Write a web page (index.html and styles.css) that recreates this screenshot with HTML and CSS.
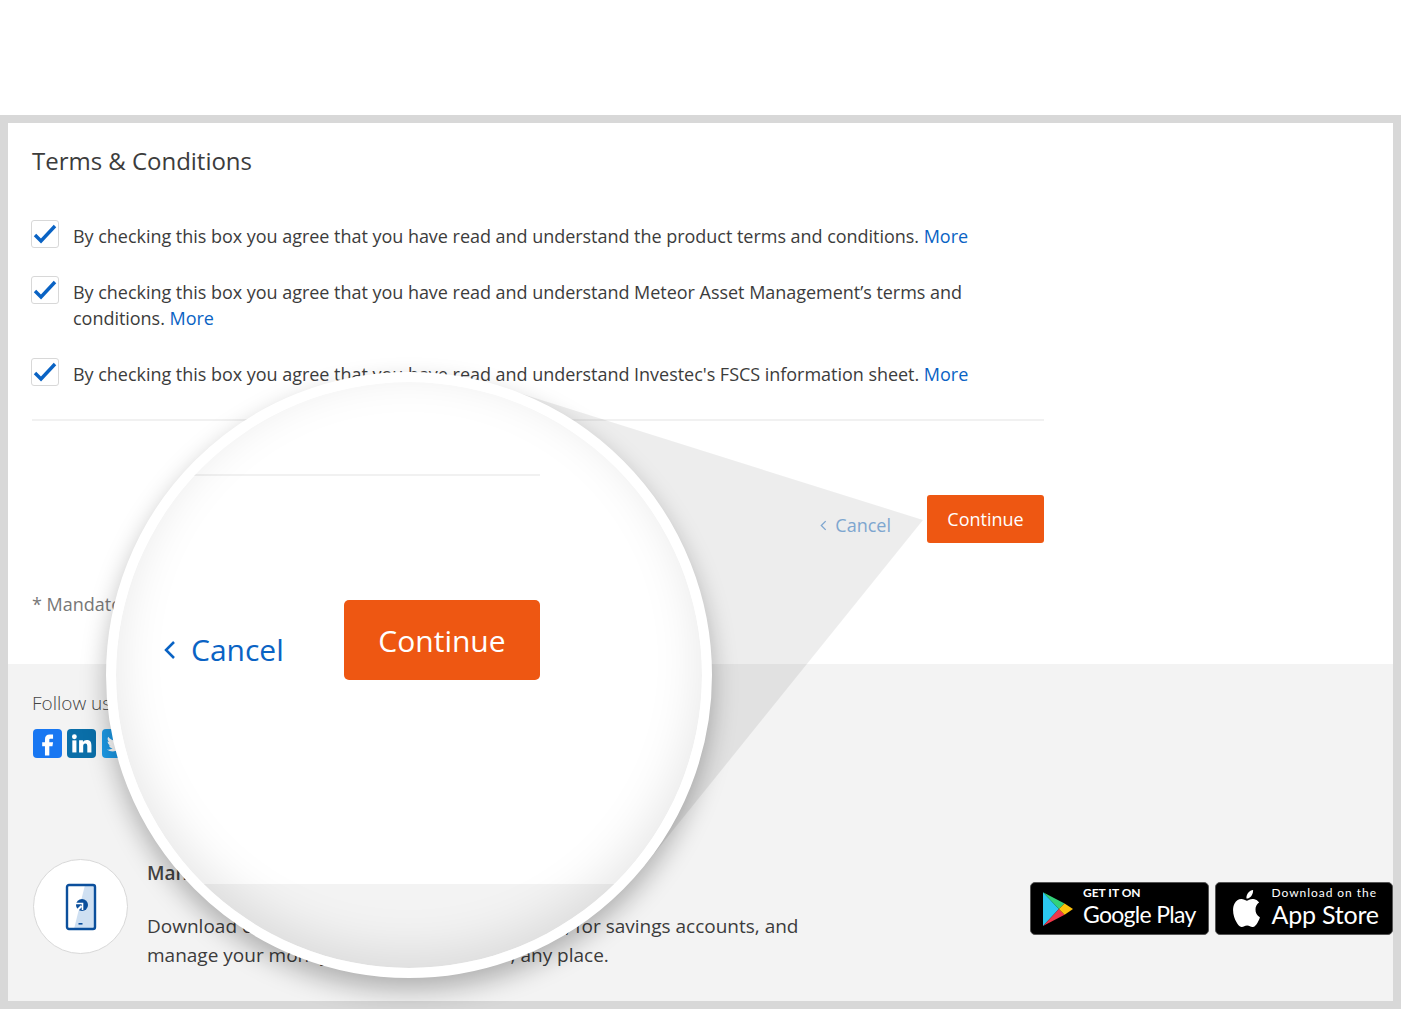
FILE: index.html
```html
<!DOCTYPE html>
<html lang="en">
<head>
    <meta charset="UTF-8">
    <meta name="viewport" content="width=device-width, initial-scale=1.0">
    <title>Terms &amp; Conditions</title>
    <link rel="stylesheet" href="styles.css">
</head>
<body>
    <div class="top"></div>
    <div class="frame">
        <div class="card">
            <h1 class="title">Terms &amp; Conditions</h1>
            <div class="terms">
                <div class="term">
                    <span class="box"><svg viewBox="0 0 24 20" width="24" height="20"><path d="M2 11l6 6L22 2" fill="none" stroke="#0a63c4" stroke-width="3.4"/></svg></span>
                    <p>By checking this box you agree that you have read and understand the product terms and conditions. <a class="more">More</a></p>
                </div>
                <div class="term">
                    <span class="box"><svg viewBox="0 0 24 20" width="24" height="20"><path d="M2 11l6 6L22 2" fill="none" stroke="#0a63c4" stroke-width="3.4"/></svg></span>
                    <p>By checking this box you agree that you have read and understand Meteor Asset Management’s terms and conditions. <a class="more">More</a></p>
                </div>
                <div class="term">
                    <span class="box"><svg viewBox="0 0 24 20" width="24" height="20"><path d="M2 11l6 6L22 2" fill="none" stroke="#0a63c4" stroke-width="3.4"/></svg></span>
                    <p>By checking this box you agree that you have read and understand Investec's FSCS information sheet. <a class="more">More</a></p>
                </div>
            </div>
            <div class="rule"></div>
            <div class="actions">
                <a class="cancel"><svg viewBox="0 0 8 12" width="7" height="11"><path d="M6.5 1L1.5 6l5 5" fill="none" stroke="currentColor" stroke-width="1.5"/></svg>Cancel</a>
                <button class="continue">Continue</button>
            </div>
            <p class="mandatory">* Mandatory fields</p>
        </div>

        <div class="footer">
            <p class="follow">Follow us</p>
            <div class="social">
                <span class="soc fb"><svg viewBox="0 0 24 24" width="29" height="29"><path d="M14.2 8h2.4V4.6h-2.8c-2.6 0-3.9 1.6-3.9 4V11H7.6v3.3h2.3V22h3.6v-7.7h2.6l.5-3.3h-3.1V8.9c0-.6.2-.9.7-.9z" fill="#fff"/></svg></span>
                <span class="soc li"><svg viewBox="0 0 24 24" width="29" height="29"><g fill="#fff"><rect x="4.4" y="9.4" width="3.4" height="10"/><circle cx="6.1" cy="6.4" r="2"/><path d="M10 9.4h3.2v1.4c.6-1 1.7-1.7 3.2-1.7 2.900 0 3.800 1.800 3.800 4.600v5.700h-3.400v-5.100c0-1.300-.3-2.400-1.600-2.400s-1.800 1-1.800 2.400v5.100H10z"/></g></svg></span>
                <span class="soc tw"><svg viewBox="0 0 24 24" width="29" height="29"><path d="M20 7.300c-.6.300-1.200.4-1.900.5.700-.4 1.200-1 1.400-1.800-.6.400-1.300.6-2.100.8a3.300 3.300 0 0 0-5.600 3c-2.700-.1-5.100-1.400-6.700-3.400-.9 1.500-.4 3.400 1 4.400-.5 0-1-.2-1.500-.4 0 1.600 1.100 2.900 2.600 3.200-.5.100-1 .2-1.500.1.400 1.300 1.600 2.200 3.100 2.300A6.600 6.600 0 0 1 3.900 17a9.300 9.300 0 0 0 14.300-8.300c.7-.4 1.300-.9 1.800-1.400z" fill="#fff"/></svg></span>
            </div>
            <div class="app-row">
                <div class="phone">
                    <svg viewBox="0 0 32 48" width="32" height="48">
                        <path d="M20 2h10v44H9z" fill="#cfe0f2"/>
                        <rect x="2" y="2" width="28" height="44" rx="2" fill="none" stroke="#0b4f9c" stroke-width="2.4"/>
                        <circle cx="17" cy="22" r="6" fill="#0b4f9c"/>
                        <path d="M10.500 29l6-6" fill="none" stroke="#fff" stroke-width="2.200"/>
                        <path d="M11 20.500h6.500V27" fill="none" stroke="#fff" stroke-width="1.600"/>
                        <rect x="13.500" y="40" width="4" height="1.600" fill="#0b4f9c"/>
                    </svg>
                </div>
                <div class="app-text">
                    <h2>Manage your account</h2>
                    <p>Download our Investec Mobile Banking app too, for savings accounts, and<br>manage your money anywhere, any hour, any place.</p>
                </div>
                <div class="stores">
                    <div class="store play">
                        <svg viewBox="0 0 32 36" width="30" height="36">
                            <path d="M0 0v36l17-18z" fill="#2bc8f0"/>
                            <path d="M0 0l17 18 6-6z" fill="#33d17a"/>
                            <path d="M0 36l17-18 6 6z" fill="#f0374a"/>
                            <path d="M23 12l-6 6 6 6 9-6z" fill="#fdc30b"/>
                        </svg>
                        <div>
                            <span class="small">GET IT ON</span>
                            <span class="big">Google Play</span>
                        </div>
                    </div>
                    <div class="store apple">
                        <svg viewBox="0 0 24 24" width="33" height="37" preserveAspectRatio="none"><path d="M12.152 6.896c-.948 0-2.415-1.078-3.960-1.040-2.040.027-3.910 1.183-4.961 3.014-2.117 3.675-.546 9.103 1.519 12.090 1.013 1.454 2.208 3.090 3.792 3.039 1.520-.065 2.090-.987 3.935-.987 1.831 0 2.350.987 3.960.948 1.637-.026 2.676-1.480 3.676-2.948 1.156-1.688 1.636-3.325 1.662-3.415-.039-.013-3.182-1.221-3.220-4.857-.026-3.040 2.480-4.494 2.597-4.559-1.429-2.090-3.623-2.324-4.390-2.376-2-.156-3.675 1.090-4.610 1.090zM15.530 3.830c.843-1.012 1.400-2.427 1.245-3.830-1.207.052-2.662.805-3.532 1.818-.780.896-1.454 2.338-1.273 3.714 1.338.104 2.715-.688 3.559-1.701" fill="#fff"/></svg>
                        <div>
                            <span class="small">Download on the</span>
                            <span class="big">App Store</span>
                        </div>
                    </div>
                </div>
            </div>
        </div>
    </div>

    <svg class="cone" viewBox="0 0 1401 1009" width="1401" height="1009"><polygon points="923,520 500,387 409,675 645,865" fill="#000" fill-opacity="0.07"/></svg>

    <div class="lens">
        <div class="lens-main">
            <div class="lens-rule"></div>
            <div class="lens-actions">
                <a class="lens-cancel"><svg viewBox="0 0 12 20" width="12" height="20"><path d="M10 2l-8 8 8 8" fill="none" stroke="currentColor" stroke-width="2.500"/></svg>Cancel</a>
                <button class="lens-continue">Continue</button>
            </div>
        </div>
        <div class="lens-foot"></div>
    </div>
</body>
</html>
```

FILE: styles.css
```css
* {
    margin: 0;
    padding: 0;
    box-sizing: border-box;
}
body {
    position: relative;
    height: 1009px;
    overflow: hidden;
    background: #fff;
    font-family: "Open Sans", "Liberation Sans", sans-serif;
    font-size: 18px;
    color: #3c3c3c;
}
.top {
    height: 115px;
}
.frame {
    height: 894px;
    padding: 8px;
    background: #d8d8d8;
}
.card {
    height: 541px;
    padding: 21px 0 0 24px;
    background: #fff;
}
.title {
    font-size: 24px;
    font-weight: 400;
    line-height: 33px;
    letter-spacing: -0.02px;
}
.terms {
    width: 1013px;
    margin: 43px 0 0 -1px;
}
.term {
    display: flex;
    gap: 14px;
    margin-bottom: 27px;
}
.term p {
    flex: 1;
    padding-top: 3px;
    line-height: 26px;
    letter-spacing: -0.03px;
}
.box {
    display: flex;
    align-items: center;
    justify-content: center;
    flex: none;
    width: 28px;
    height: 28px;
    background: #fff;
    border: 1px solid #d8d8d8;
    border-radius: 3px;
}
.more {
    color: #0a63c4;
}
.rule {
    width: 1012px;
    height: 2px;
    margin-top: 32px;
    background: #f1f1f1;
}
.actions {
    display: flex;
    align-items: flex-start;
    justify-content: flex-end;
    width: 1012px;
    margin-top: 74px;
}
.cancel {
    display: flex;
    align-items: center;
    gap: 8px;
    margin: 18px 36px 0 0;
    line-height: 24px;
    color: #88b3e0;
}
.continue {
    width: 117px;
    height: 48px;
    border: 0;
    border-radius: 3px;
    background: #ee5712;
    color: #fff;
    font-family: inherit;
    font-size: 18px;
}
.mandatory {
    margin-top: 49px;
    line-height: 24px;
    color: #777;
}
.footer {
    height: 337px;
    padding: 26px 0 0 24px;
    background: #f3f3f3;
}
.follow {
    font-size: 19px;
    font-weight: 300;
    line-height: 26px;
    color: #444;
}
.social {
    display: flex;
    gap: 5.500px;
    margin: 13px 0 0 0.700px;
}
.soc {
    display: block;
    width: 29px;
    height: 29px;
    border-radius: 4px;
}
.fb {
    background: #1877f2;
}
.li {
    background: #0a6ea8;
}
.tw {
    background: #1d9be8;
}
.app-row {
    display: flex;
    margin-top: 101px;
}
.phone {
    display: flex;
    align-items: center;
    justify-content: center;
    flex: none;
    width: 95px;
    height: 95px;
    margin-left: 1px;
    background: #fff;
    border: 1px solid #d8d8d8;
    border-radius: 50%;
}
.app-text {
    width: 902px;
    padding: 1px 0 0 19px;
}
.app-text h2 {
    font-size: 19px;
    font-weight: 600;
    line-height: 26px;
    color: #444;
}
.app-text p {
    margin-top: 26px;
    font-size: 19px;
    line-height: 29px;
}
.stores {
    display: flex;
    gap: 6px;
    margin-top: 23px;
}
.store {
    display: flex;
    align-items: center;
    width: 178.500px;
    height: 53px;
    background: #000;
    border: 1px solid #555;
    border-radius: 5px;
    color: #fff;
    font-family: Lato, "Liberation Sans", sans-serif;
}
.store span {
    display: block;
}
.store div {
    margin-top: -4px;
}
.play {
    gap: 10px;
    padding-left: 12px;
}
.play .small {
    font-size: 12px;
    line-height: 14px;
    font-weight: 700;
}
.play .big {
    font-size: 23px;
    line-height: 28px;
    letter-spacing: -0.7px;
}
.apple {
    gap: 9px;
    padding-left: 14px;
}
.apple .small {
    font-size: 12px;
    line-height: 14px;
    letter-spacing: 0.95px;
}
.apple .big {
    font-size: 25px;
    line-height: 28px;
    letter-spacing: -0.2px;
}
.cone {
    position: absolute;
    top: 0;
    left: 0;
}
.lens {
    position: absolute;
    top: 372px;
    left: 106px;
    display: flex;
    flex-direction: column;
    width: 606px;
    height: 606px;
    overflow: hidden;
    background: #fff;
    border: 10px solid #fff;
    border-radius: 50%;
    box-shadow: 0 12px 26px rgba(0, 0, 0, 0.28);
}
.lens::after {
    content: "";
    position: absolute;
    inset: 0;
    border-radius: 50%;
    box-shadow: inset 0 -14px 50px rgba(0, 0, 0, 0.1);
}
.lens-main {
    height: 502px;
    padding-top: 92px;
}
.lens-rule {
    width: 424px;
    height: 2px;
    background: #f1f1f1;
}
.lens-actions {
    display: flex;
    align-items: flex-start;
    width: 424px;
    margin-top: 124px;
    padding-left: 48px;
}
.lens-cancel {
    display: flex;
    align-items: center;
    gap: 15px;
    margin-top: 29px;
    font-size: 30px;
    line-height: 42px;
    color: #0a63c4;
}
.lens-continue {
    width: 196px;
    height: 80px;
    margin-left: auto;
    border: 0;
    border-radius: 5px;
    background: #ee5712;
    color: #fff;
    font-family: inherit;
    font-size: 30px;
}
.lens-foot {
    flex: 1;
    background: #f3f3f3;
}
```
